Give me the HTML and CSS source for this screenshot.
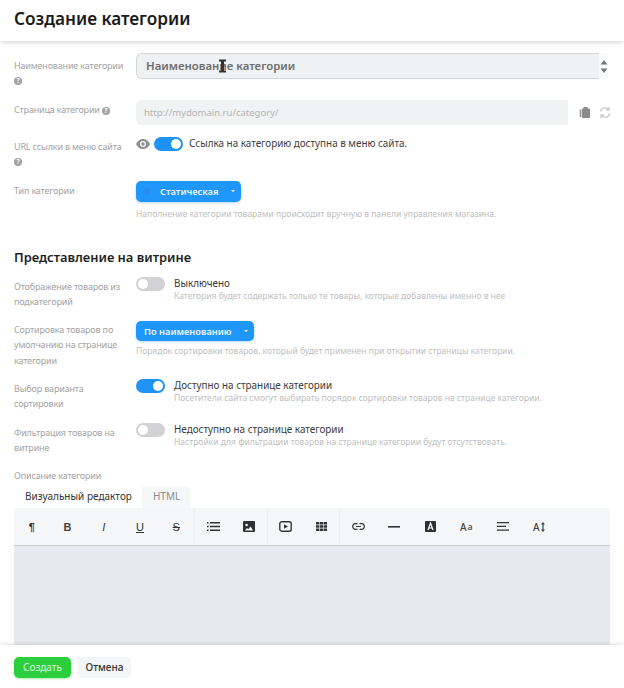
FILE: index.html
```html
<!DOCTYPE html>
<html lang="ru">
<head>
<meta charset="utf-8">
<title>Создание категории</title>
<link rel="stylesheet" href="styles.css">
</head>
<body>
<div class="dialog">
  <header class="head"><h1>Создание категории</h1></header>
  <main class="body">
    <div class="row row-name">
      <div class="label">Наименование категории <span class="help help-below">?</span></div>
      <div class="value">
        <div class="name-input">
          <span>Наименование категории</span>
          <svg class="ibeam" width="7" height="14" viewBox="0 0 7 14"><path d="M0 .5h7v2H5v9h2v2H0v-2h2v-9H0z" fill="#333"/></svg>
          <span class="spin"><svg width="8" height="19" viewBox="0 0 8 19"><path d="M4 3 7.500 7.500H.5zM.5 11.500h7L4 16z" fill="#777"/></svg></span>
        </div>
      </div>
    </div>
    <div class="row row-page">
      <div class="label">Страница категории <span class="help">?</span></div>
      <div class="value page-line">
        <div class="page-input">http://mydomain.ru/category/</div>
        <svg class="copy" width="12" height="13" viewBox="0 0 12 13"><path d="M3 2.500h1.500V1h4v1.500H11v9.500H3z" fill="#8a8a8a"/><path d="M1.500 3.500V11" stroke="#8a8a8a" stroke-width="1.500"/></svg>
        <svg class="sync" width="12" height="13" viewBox="0 0 12 13" fill="none" stroke="#c8c8c8" stroke-width="1.300"><path d="M1.500 5.500C2 3 4 1.800 6 1.800c1.500 0 2.800.7 3.500 1.700M10.500 7.500C10 10 8 11.200 6 11.200c-1.500 0-2.800-.7-3.500-1.700"/><path d="M10 1v3H7M2 12V9h3"/></svg>
      </div>
    </div>
    <div class="row row-url">
      <div class="label">URL ссылки в меню сайта <span class="help help-below">?</span></div>
      <div class="value url-line">
        <svg class="eye" width="14" height="10" viewBox="0 0 14 10"><path d="M7 0C4 0 1.400 2 0 5c1.400 3 4 5 7 5s5.600-2 7-5c-1.400-3-4-5-7-5z" fill="#8f8f8f"/><circle cx="7" cy="5" r="3" fill="#fff"/><circle cx="7" cy="5" r="1.800" fill="#8f8f8f"/></svg>
        <span class="toggle on"><i></i></span>
        <span class="url-text">Ссылка на категорию доступна в меню сайта.</span>
      </div>
    </div>
    <div class="row row-type">
      <div class="label">Тип категории</div>
      <div class="value">
        <div class="select select-type"><span class="dot"></span><span class="select-text">Статическая</span><span class="caret"></span></div>
        <p class="hint hint-type">Наполнение категории товарами происходит вручную в панели управления магазина.</p>
      </div>
    </div>
    <h2>Представление на витрине</h2>
    <div class="row row-sub">
      <div class="label label-low">Отображение товаров из подкатегорий</div>
      <div class="value switch-line">
        <span class="toggle"><i></i></span>
        <div><div class="switch-title">Выключено</div><p class="hint">Категория будет содержать только те товары, которые добавлены именно в нее</p></div>
      </div>
    </div>
    <div class="row row-sort">
      <div class="label label-low">Сортировка товаров по умолчанию на странице категории</div>
      <div class="value">
        <div class="select select-sort"><span class="select-text">По наименованию</span><span class="caret"></span></div>
        <p class="hint hint-sort">Порядок сортировки товаров, который будет применен при открытии страницы категории.</p>
      </div>
    </div>
    <div class="row row-choice">
      <div class="label label-low">Выбор варианта сортировки</div>
      <div class="value switch-line">
        <span class="toggle on"><i></i></span>
        <div><div class="switch-title">Доступно на странице категории</div><p class="hint">Посетители сайта смогут выбирать порядок сортировки товаров на странице категории.</p></div>
      </div>
    </div>
    <div class="row row-filter">
      <div class="label label-low">Фильтрация товаров на витрине</div>
      <div class="value switch-line">
        <span class="toggle"><i></i></span>
        <div><div class="switch-title">Недоступно на странице категории</div><p class="hint">Настройки для фильтрации товаров на странице категории будут отсутствовать.</p></div>
      </div>
    </div>
    <div class="desc-label">Описание категории</div>
    <div class="tabs"><span class="tab active">Визуальный редактор</span><span class="tab">HTML</span></div>
    <div class="toolbar">
      <span class="tool t-text t-p">¶</span>
      <span class="tool t-text t-b">B</span>
      <span class="tool t-text t-i">I</span>
      <span class="tool t-text t-u">U</span>
      <span class="tool t-text t-s">S</span>
      <span class="tool sep"><svg width="13" height="9" viewBox="0 0 13 9" fill="#333"><path d="M0 0h1.500v1.400H0zM3 0h10v1.400H3zM0 3.800h1.500v1.400H0zM3 3.800h10v1.400H3zM0 7.600h1.500V9H0zM3 7.600h10V9H3z"/></svg></span>
      <span class="tool"><svg width="12" height="11" viewBox="0 0 12 11"><path d="M0 1A1 1 0 0 1 1 0h10a1 1 0 0 1 1 1v9a1 1 0 0 1-1 1H1a1 1 0 0 1-1-1z" fill="#2f3033"/><circle cx="3.600" cy="4" r="1.200" fill="#fff"/><path d="M2 9.500l2-2.500 1.300 1.200L7.500 5.500 10 9.500z" fill="#fff"/></svg></span>
      <span class="tool sep"><svg width="13" height="11" viewBox="0 0 13 11"><rect x=".8" y=".8" width="11.400" height="9.400" rx="2" fill="none" stroke="#333" stroke-width="1.400"/><path d="M5 3.200 9 5.500 5 7.800z" fill="#333"/></svg></span>
      <span class="tool"><svg width="11" height="9" viewBox="0 0 11 9" fill="#333"><path d="M0 0h3.400v2.400H0zM4 0h3v2.400H4zM7.600 0H11v2.400H7.600zM0 3.300h3.400v2.400H0zM4 3.300h3v2.400H4zM7.600 3.300H11v2.400H7.600zM0 6.600h3.400V9H0zM4 6.600h3V9H4zM7.600 6.600H11V9H7.600z"/></svg></span>
      <span class="tool sep"><svg width="13" height="7" viewBox="0 0 13 7" fill="none" stroke="#333" stroke-width="1.200"><path d="M5.500.7H3.500a2.800 2.800 0 0 0 0 5.600h2M7.500.7h2a2.800 2.800 0 0 1 0 5.600h-2M4 3.500h5"/></svg></span>
      <span class="tool"><svg width="12" height="2" viewBox="0 0 12 2"><path d="M0 0h12v1.600H0z" fill="#333"/></svg></span>
      <span class="tool"><svg width="11" height="11" viewBox="0 0 11 11"><rect width="11" height="11" rx="1" fill="#2f3033"/><path d="M3 9 5.500 2 8 9M3.800 7h3.400" fill="none" stroke="#fff" stroke-width="1.200"/></svg></span>
      <span class="tool t-aa">A<small>a</small></span>
      <span class="tool"><svg width="12" height="9" viewBox="0 0 12 9" fill="#333"><path d="M0 0h12v1.200H0zM0 3.800h9v1.200H0zM0 7.600h12v1.200H0z"/></svg></span>
      <span class="tool t-az">A<svg width="4" height="10" viewBox="0 0 4 10"><path d="M2 0 4 2.500H2.600v5H4L2 10 0 7.500h1.400v-5H0z" fill="#444"/></svg></span>
    </div>
    <div class="editor"></div>
  </main>
  <footer class="foot">
    <span class="btn btn-go">Создать</span>
    <span class="btn btn-cancel">Отмена</span>
  </footer>
</div>
</body>
</html>
```
FILE: styles.css
```css
* { box-sizing: border-box; }
html, body { margin: 0; height: 100%; background: #fff; }
body { font-family: "Noto Sans", "Open Sans", sans-serif; overflow: hidden; }
.dialog { width: 624px; height: 688px; display: flex; flex-direction: column; position: relative; }
.head { height: 41px; padding: 7px 14px 0; background: #fff; box-shadow: 0 1px 5px rgba(0,0,0,.2); position: relative; z-index: 2; flex: none; }
h1 { margin: 0; font-size: 17.200px; line-height: 24px; font-weight: 600; color: #1b1b1b; }
.body { flex: 1; min-height: 0; overflow: hidden; padding: 12px 14px 0; }
.row { display: grid; grid-template-columns: 122px 1fr; }
.label { font-size: 9px; letter-spacing: -.17px; line-height: 15.300px; color: #a3a3a3; padding-right: 4px; }
.label-low { padding-top: 2px; }
.help { display: inline-block; width: 8px; height: 8px; border-radius: 50%; background: #a2a2a2; color: #fff; font-size: 6.500px; letter-spacing: 0; line-height: 8px; text-align: center; font-weight: 700; vertical-align: 0; }
.help-below { display: block; margin-top: 4px; }
.row-name { height: 47px; }
.row-name .label { padding-top: 5px; }
.name-input { width: 472px; height: 26px; border: 1px solid #d4d5d6; border-right: 0; border-radius: 6px 0 0 6px; background: #f0f1f2; padding-left: 9px; font-size: 11.400px; font-weight: 600; line-height: 24px; color: #6d6d6d; position: relative; }
.ibeam { position: absolute; left: 82px; top: 5px; }
.spin { position: absolute; right: 0; top: -1px; width: 9px; height: 26px; background: #fafafa; display: flex; align-items: center; justify-content: center; }
.row-page { height: 37px; }
.row-page .label { padding-top: 2px; }
.page-line { display: flex; align-items: center; height: 25px; }
.page-input { width: 432px; height: 25px; background: #f1f2f3; border-radius: 6px 0 0 6px; padding-left: 8px; font-size: 9.500px; line-height: 25px; color: #b2b2b2; flex: none; }
.copy { margin-left: 11px; }
.sync { margin-left: 8px; }
.row-url { height: 44px; }
.row-url .label { padding-top: 2px; }
.url-line { display: flex; align-items: flex-start; }
.eye { margin-top: 2px; margin-right: 4px; }
.url-text { margin-left: 6px; font-size: 9.900px; line-height: 13px; color: #3b3b3b; }
.toggle { display: inline-block; width: 29px; height: 14px; border-radius: 7px; background: #d2d2d4; position: relative; flex: none; }
.toggle i { position: absolute; left: 2px; top: 2px; width: 10px; height: 10px; border-radius: 50%; background: #fff; }
.toggle.on { background: #1f93f5; }
.toggle.on i { left: 17px; }
.row-type { height: 67px; }
.row-type .label { padding-top: 2px; }
.select { height: 21px; border-radius: 5px; background: #1f96fa; box-shadow: 0 1px 3px rgba(31,150,250,.35); color: #eef7ff; font-size: 9.300px; font-weight: 600; display: flex; align-items: center; position: relative; }
.select-type { width: 105px; padding-left: 24px; }
.select-sort { width: 118px; padding-left: 8px; margin-top: 1px; height: 20px; }
.dot { position: absolute; left: 7px; top: 7px; width: 7px; height: 7px; border-radius: 50%; background: #2a8af0; }
.caret { position: absolute; right: 6px; top: 9px; border: 2.500px solid transparent; border-top-color: #fff; border-bottom: 0; }
.hint { margin: 0; font-size: 8.500px; line-height: 12px; color: #c0c0c0; white-space: nowrap; }
.hint-type { margin-top: 6px; }
.hint-sort { margin-top: 4px; }
h2 { margin: 0 0 11px; font-size: 12.900px; line-height: 18px; font-weight: 600; color: #1e1e1e; }
.switch-line { display: flex; gap: 9px; }
.switch-title { font-size: 9.900px; line-height: 13px; color: #3a3a3a; }
.row-sub { height: 43px; }
.row-sort { height: 59px; }
.row-choice { height: 44px; }
.row-filter { height: 45px; }
.desc-label { font-size: 9px; letter-spacing: -.17px; line-height: 15px; padding-bottom: 3px; color: #a3a3a3; }
.tabs { display: flex; height: 22px; }
.tab { font-size: 10px; line-height: 21px; padding: 0 10px 0 11px; color: #8c8c8c; background: #f6f7f8; border-radius: 0 5px 0 0; }
.tab.active { color: #333; background: #fff; border-radius: 5px 5px 0 0; }
.toolbar { display: flex; height: 38px; width: 596px; background: #f5f6f8; border-bottom: 1px solid #c9ccd0; align-items: stretch; }
.tool { width: 36.250px; display: flex; align-items: center; justify-content: center; color: #333; flex: none; }
.t-p { width: 35.400px; }
.sep { border-left: 1px solid #eceef0; }
.t-text { font-family: "Liberation Sans", sans-serif; font-size: 11px; font-weight: 700; }
.t-b { color: #444; }
.t-i { font-style: italic; font-weight: 400; }
.t-u { text-decoration: underline; font-weight: 400; }
.t-s { text-decoration: line-through; font-weight: 400; }
.t-aa, .t-az { font-size: 10px; font-weight: 500; color: #444; gap: 1px; }
.t-aa small { font-size: 9px; }
.editor { width: 596px; height: 100px; background: #e6e9ef; }
.foot { height: 43px; flex: none; background: #fff; padding: 12px 14px 0; display: flex; gap: 7px; align-items: flex-start; box-shadow: 0 -1px 4px rgba(0,0,0,.12); position: relative; z-index: 2; }
.btn { height: 21px; border-radius: 5px; font-size: 10px; line-height: 21px; text-align: center; }
.btn-go { width: 57px; background: #2bcf3e; color: #d8f7dc; box-shadow: 0 1px 2px rgba(43,207,62,.4); }
.btn-cancel { width: 53px; background: #f4f5f6; color: #333; font-weight: 500; }
```
